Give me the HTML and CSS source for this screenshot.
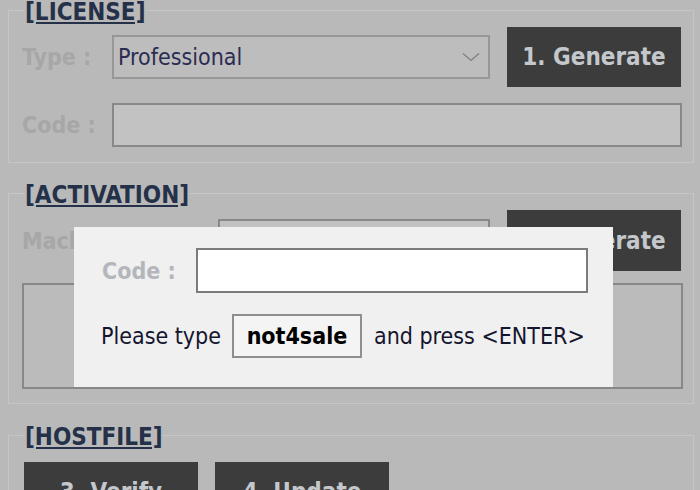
FILE: index.html
```html
<!DOCTYPE html>
<html>
<head>
<meta charset="utf-8">
<title>License</title>
<link rel="stylesheet" href="styles.css">
</head>
<body>
<div class="form">
  <section class="group g-license">
    <div class="legend">[LICENSE]</div>
    <div class="row r-type">
      <span class="lbl">Type :</span>
      <div class="select"><span class="sel-text">Professional</span><svg class="chev" width="18" height="10" viewBox="0 0 18 10"><path d="M1 1.5 L9 8.5 L17 1.5" fill="none" stroke="#7f7f7f" stroke-width="1.3"/></svg></div>
      <div class="btn">1. Generate</div>
    </div>
    <div class="row r-code">
      <span class="lbl">Code :</span>
      <div class="input code-input"></div>
    </div>
  </section>

  <section class="group g-activation">
    <div class="legend">[ACTIVATION]</div>
    <div class="row r-machine">
      <span class="lbl lbl-wide">Machine ID :</span>
      <div class="input machine-input"></div>
      <div class="btn">2. Generate</div>
    </div>
    <div class="row r-text">
      <div class="input textarea"></div>
    </div>
  </section>

  <section class="group g-host">
    <div class="legend">[HOSTFILE]</div>
    <div class="row r-buttons">
      <div class="btn">3. Verify</div>
      <div class="btn">4. Update</div>
    </div>
  </section>
</div>

<div class="modal">
  <div class="m-row">
    <span class="m-lbl">Code :</span>
    <div class="m-input"></div>
  </div>
  <div class="m-row m-row2">
    <span class="m-text">Please type</span>
    <span class="m-code">not4sale</span>
    <span class="m-text">and press &lt;ENTER&gt;</span>
  </div>
</div>
</body>
</html>
```

FILE: styles.css
```css
html, body {
  margin: 0;
  padding: 0;
}
body {
  width: 700px;
  height: 490px;
  overflow: hidden;
  position: relative;
  background: #b9b9b9;
  font-family: "DejaVu Sans Condensed", "DejaVu Sans", sans-serif;
  font-size: 23px;
  color: #262840;
}
.form {
  padding: 10px 6px 0 8px;
}
.group {
  border: 1px solid #c6c6c6;
}
.g-license {
  padding-bottom: 15px;
}
.g-activation {
  margin-top: 30px;
  padding-bottom: 14px;
}
.g-host {
  margin-top: 31px;
  height: 200px;
}
.legend {
  width: fit-content;
  margin: -11px 0 0 16px;
  background: #b9b9b9;
  font-weight: bold;
  font-size: 24px;
  line-height: 24px;
  color: #243149;
  text-decoration: underline;
  text-underline-offset: 2px;
  white-space: nowrap;
}
.row {
  display: flex;
  align-items: center;
  padding-left: 13px;
}
.lbl {
  flex: none;
  width: 90px;
  font-weight: bold;
  color: #a7a7a7;
  white-space: nowrap;
  overflow: hidden;
}
.lbl-wide {
  width: 196px;
}
.r-type {
  margin-top: 3px;
}
.select {
  flex: none;
  box-sizing: border-box;
  width: 378px;
  height: 44px;
  border: 2px solid #979797;
  background: #bdbdbd;
  display: flex;
  align-items: center;
  justify-content: space-between;
  padding: 0 8px 0 4px;
}
.sel-text {
  color: #2a2c52;
}
.btn {
  flex: none;
  box-sizing: border-box;
  width: 174px;
  height: 60px;
  margin-left: 17px;
  background: #3c3c3c;
  color: #c4c8cc;
  font-weight: bold;
  font-size: 24px;
  display: flex;
  align-items: center;
  justify-content: center;
  white-space: nowrap;
}
.input {
  flex: none;
  box-sizing: border-box;
  height: 44px;
  border: 2px solid #888888;
  background: #c2c2c2;
}
.r-code {
  margin-top: 16px;
}
.code-input {
  width: 570px;
}
.r-machine {
  margin-top: 3px;
}
.r-machine .btn {
  height: 61px;
}
.machine-input {
  width: 272px;
}
.r-text {
  margin-top: 12px;
}
.textarea {
  width: 661px;
  height: 106px;
  background: #bbbbbb;
}
.r-buttons {
  margin-top: 13px;
  padding-left: 15px;
}
.r-buttons .btn:first-child {
  margin-left: 0;
}

.modal {
  position: absolute;
  left: 74px;
  top: 227px;
  width: 539px;
  height: 160px;
  box-sizing: border-box;
  padding: 21px 25px 0 28px;
  background: #f0f0f0;
}
.m-row {
  display: flex;
  align-items: center;
}
.m-lbl {
  flex: none;
  width: 94px;
  font-weight: bold;
  color: #b3b6bb;
}
.m-input {
  flex: 1;
  height: 45px;
  box-sizing: border-box;
  border: 2px solid #7b7b7b;
  background: #ffffff;
}
.m-row2 {
  margin-top: 21px;
  margin-left: -1px;
}
.m-text {
  color: #15152e;
  white-space: nowrap;
}
.m-code {
  box-sizing: border-box;
  width: 130px;
  height: 44px;
  margin: 0 12px 0 11px;
  border: 2px solid #8e8e8e;
  background: #f4f4f4;
  color: #000;
  font-weight: bold;
  font-size: 23px;
  display: flex;
  align-items: center;
  justify-content: center;
}
```
